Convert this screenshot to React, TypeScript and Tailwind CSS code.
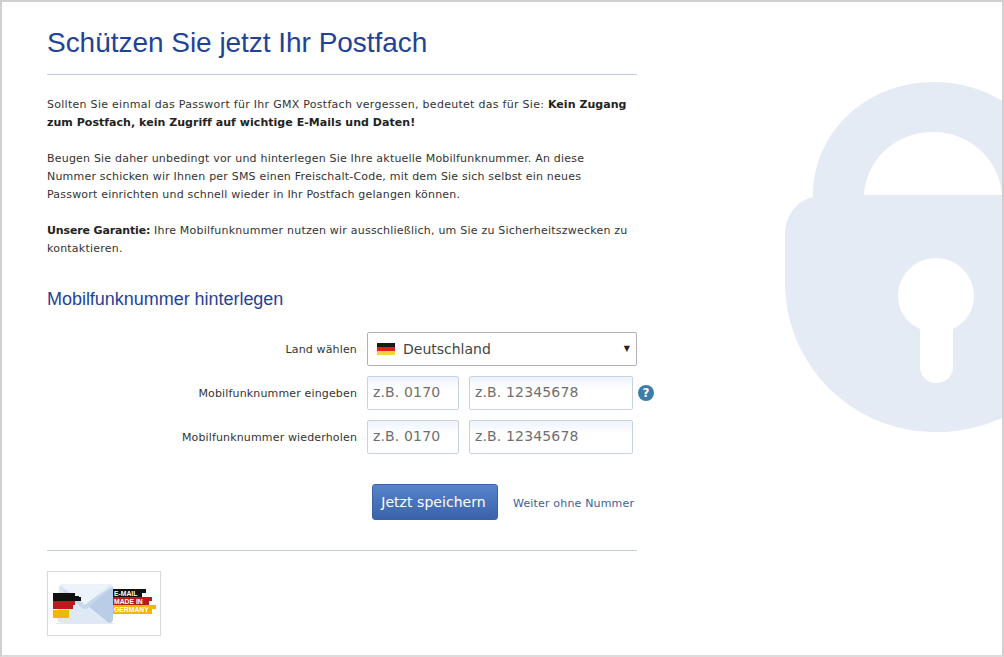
import React from 'react';

const LockBackground: React.FC = () => (
  <svg className="absolute -left-[2px] -top-[2px] pointer-events-none" width="1004" height="657" viewBox="0 0 1004 657">
    <path
      fill="#e4ebf5"
      fillRule="evenodd"
      d="M813 197 C813 132 866 82 934 82 C962 82 985 90 1004 102 V417 C982 427 960 432 936 432 C852 432 785 365 785 282 V235 C785 215 797 201 813 197 Z
         M864 195 H1002 C1000 160 970 132 933 132 C895 132 866 160 864 195 Z
         M936 258 C915 258 898 275 898 296 C898 311 907 323 920 329 V367 C920 376 927 383 936 383 C946 383 953 376 953 367 V329 C965 323 974 311 974 296 C974 275 957 258 936 258 Z"
    />
  </svg>
);

const GermanFlag: React.FC = () => (
  <span className="flex flex-col w-[18px] h-[13px] mr-2 shrink-0">
    <span className="h-1/3 bg-[#1a1a1a]" />
    <span className="h-1/3 bg-[#d8261c]" />
    <span className="h-1/3 bg-[#f5d33f]" />
  </span>
);

const MadeInGermany: React.FC = () => (
  <svg width="112" height="63" viewBox="0 0 112 63">
    {/* envelope */}
    <path fill="#dfe9f6" d="M11 15 Q12 12 17 12 H60 Q65 12 65 16 V47 Q65 51 60 51 H14 Q9 51 9 47 Z" />
    <path fill="#b9cde6" d="M65 15 V47 Q65 51 61 51 L39 33 Z" />
    <path fill="#c6d7ec" d="M10 14 L34 36 Q37 38 40 36 L65 14 L40 30 Q37 32 34 30 Z" />
    <path fill="#edf3fb" d="M12 12 H63 L38 32 Q37 33 36 32 Z" />
    <rect x="8" y="51" width="58" height="1" fill="#e6e9ee" />
    {/* flag strips */}
    <path fill="#111" d="M5 21 H27 V24 H31 V25 H33 V29 H5 Z" />
    <path fill="#b91c1c" d="M5 29 H27 V33 H25 V37 H5 Z" />
    <path fill="#f2b705" d="M5 38 H21 V46 H5 Z" />
    {/* badges */}
    <path fill="#111" d="M65 17 H98 V21 H94 V25 H65 Z" />
    <path fill="#b91c1c" d="M65 25 H104 V29 H101 V33 H65 Z" />
    <path fill="#f2b705" d="M65 33 H108 V37 H104 V42 H65 Z" />
    <text x="66" y="23.5" fill="#fff" fontSize="6.8" fontWeight="700" fontFamily="'Liberation Sans', sans-serif">E-MAIL</text>
    <text x="66" y="31.8" fill="#fff" fontSize="6.8" fontWeight="700" fontFamily="'Liberation Sans', sans-serif">MADE IN</text>
    <text x="66" y="40" fill="#fff" fontSize="6.8" fontWeight="700" fontFamily="'Liberation Sans', sans-serif">GERMANY</text>
  </svg>
);

const PhoneFields: React.FC = () => (
  <div className="flex gap-[10px]">
    <input
      placeholder="z.B. 0170"
      className="w-[92px] h-[34px] px-[5px] pb-[2px] border border-[#c8d2de] rounded-[2px] bg-linear-to-b from-[#eef3fb] to-white to-40% text-[14px] tracking-[0.15px] placeholder:text-[#6f6f6f] outline-none"
    />
    <input
      placeholder="z.B. 12345678"
      className="w-[164px] h-[34px] px-[5px] pb-[2px] border border-[#c8d2de] rounded-[2px] bg-linear-to-b from-[#eef3fb] to-white to-40% text-[14px] tracking-[0.15px] placeholder:text-[#6f6f6f] outline-none"
    />
  </div>
);

const App: React.FC = () => {
  return (
    <div className="relative w-[1004px] h-[657px] overflow-hidden bg-white border-2 border-[#d0d0d0] border-b-[#dcdcdc] font-['DejaVu_Sans',Verdana,sans-serif] text-[11px] leading-[18px] text-[#333]">
      <LockBackground />
      <div className="relative w-[590px] ml-[45px]">
        <h1 className="pt-[23px] pb-[13px] border-b border-[#c3cede] font-['Liberation_Sans',Arial,sans-serif] text-[28px] leading-[36px] tracking-[-0.03px] text-[#1f4396]">
          Schützen Sie jetzt Ihr Postfach
        </h1>

        <div className="mt-[21px] flex flex-col gap-[18px] whitespace-nowrap">
          <p className="tracking-[0.28px]">
            Sollten Sie einmal das Passwort für Ihr GMX Postfach vergessen, bedeutet das für Sie:{' '}
            <b className="text-[#222] tracking-[0.04px]">Kein Zugang<br />zum Postfach, kein Zugriff auf wichtige E-Mails und Daten!</b>
          </p>
          <p className="tracking-[0.2px]">
            Beugen Sie daher unbedingt vor und hinterlegen Sie Ihre aktuelle Mobilfunknummer. An diese<br />
            Nummer schicken wir Ihnen per SMS einen Freischalt-Code, mit dem Sie sich selbst ein neues<br />
            Passwort einrichten und schnell wieder in Ihr Postfach gelangen können.
          </p>
          <p className="tracking-[0.22px]">
            <b className="text-[#222] tracking-[-0.14px]">Unsere Garantie:</b> Ihre Mobilfunknummer nutzen wir ausschließlich, um Sie zu Sicherheitszwecken zu<br />
            kontaktieren.
          </p>
        </div>

        <h2 className="mt-[30px] font-['Liberation_Sans',Arial,sans-serif] text-[18px] leading-[22px] tracking-[-0.03px] text-[#1f4396]">
          Mobilfunknummer hinterlegen
        </h2>

        <div className="mt-[22px] flex flex-col gap-[10px]">
          <div className="flex items-center gap-[10px]">
            <label className="w-[310px] pt-[2px] text-right tracking-[0.15px]">Land wählen</label>
            <div className="flex items-center w-[270px] h-[34px] pl-[9px] pr-[6px] border border-[#aeb2b8] rounded-[2px] bg-white text-[14px] text-[#444]">
              <GermanFlag />
              <span>Deutschland</span>
              <span className="ml-auto text-[8px] text-[#222]">▼</span>
            </div>
          </div>
          <div className="relative flex items-center gap-[10px]">
            <label className="w-[310px] pt-[2px] text-right tracking-[0.15px]">Mobilfunknummer eingeben</label>
            <PhoneFields />
            <span className="absolute left-[591px] top-[9px] flex items-center justify-center w-4 h-4 rounded-full bg-[#3c7ea8] text-white text-[12px] font-bold">?</span>
          </div>
          <div className="flex items-center gap-[10px]">
            <label className="w-[310px] pt-[2px] text-right tracking-[0.15px]">Mobilfunknummer wiederholen</label>
            <PhoneFields />
          </div>
        </div>

        <div className="mt-[30px] ml-[325px] flex items-center gap-[15px]">
          <button className="w-[126px] h-[36px] pr-[3px] rounded-[3px] border border-[#3a62a8] bg-linear-to-b from-[#5784cb] to-[#3a62ab] text-[14px] tracking-[0.05px] text-white">
            Jetzt speichern
          </button>
          <a className="pt-[3px] tracking-[0.17px] text-[#3c5e9c]">Weiter ohne Nummer</a>
        </div>

        <div className="mt-[30px] border-t border-[#c3d0de]" />

        <div className="mt-[20px] flex items-center justify-center w-[114px] h-[65px] border border-[#d9d9d9] bg-white">
          <MadeInGermany />
        </div>
      </div>
    </div>
  );
};

export default App;
